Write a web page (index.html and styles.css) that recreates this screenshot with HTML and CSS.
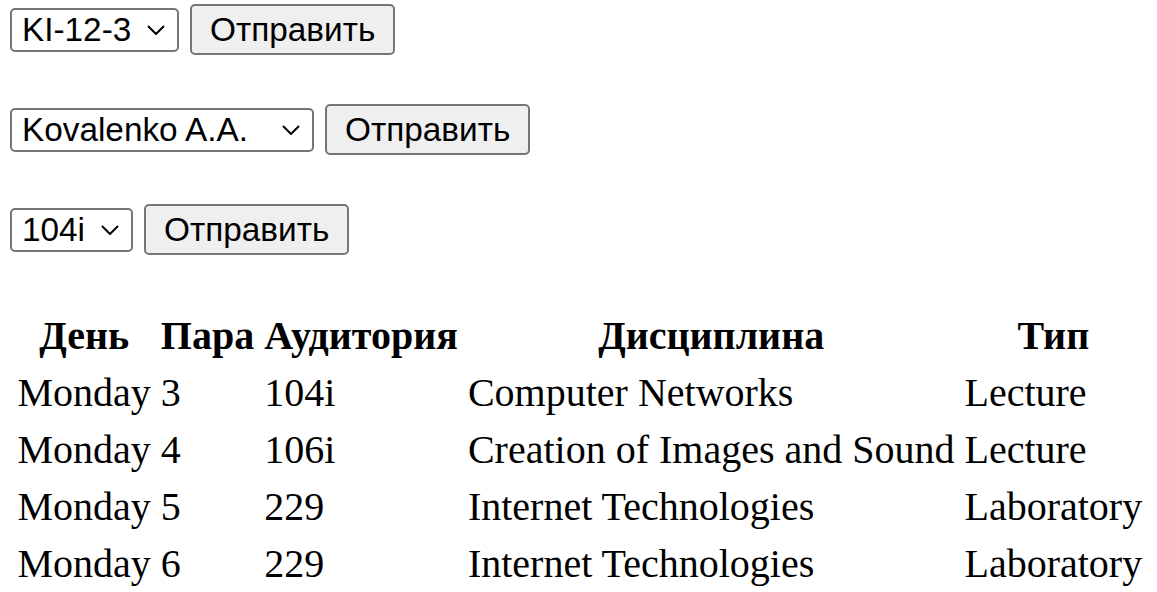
FILE: index.html
```html
<!DOCTYPE html>
<html lang="ru">
<head>
<meta charset="utf-8">
<title>Расписание</title>
<link rel="stylesheet" href="styles.css">
</head>
<body>
<form class="picker">
  <div class="select-wrap select-group">
    <select class="picker-select"><option>KI-12-3</option></select>
    <svg class="chevron" width="18" height="10" viewBox="0 0 18 10"><polyline points="1,1 9,9 17,1"/></svg>
  </div>
  <button class="picker-btn" type="button">Отправить</button>
</form>
<form class="picker">
  <div class="select-wrap select-teacher">
    <select class="picker-select"><option>Kovalenko A.A.</option></select>
    <svg class="chevron" width="18" height="10" viewBox="0 0 18 10"><polyline points="1,1 9,9 17,1"/></svg>
  </div>
  <button class="picker-btn" type="button">Отправить</button>
</form>
<form class="picker">
  <div class="select-wrap select-room">
    <select class="picker-select"><option>104i</option></select>
    <svg class="chevron" width="18" height="10" viewBox="0 0 18 10"><polyline points="1,1 9,9 17,1"/></svg>
  </div>
  <button class="picker-btn" type="button">Отправить</button>
</form>
<table class="schedule">
  <thead>
    <tr><th>День</th><th>Пара</th><th>Аудитория</th><th>Дисциплина</th><th>Тип</th></tr>
  </thead>
  <tbody>
    <tr><td>Monday</td><td>3</td><td>104i</td><td>Computer Networks</td><td>Lecture</td></tr>
    <tr><td>Monday</td><td>4</td><td>106i</td><td>Creation of Images and Sound</td><td>Lecture</td></tr>
    <tr><td>Monday</td><td>5</td><td>229</td><td>Internet Technologies</td><td>Laboratory</td></tr>
    <tr><td>Monday</td><td>6</td><td>229</td><td>Internet Technologies</td><td>Laboratory</td></tr>
  </tbody>
</table>
</body>
</html>
```
FILE: styles.css
```css
html, body {
  margin: 0;
  background: #ffffff;
  color: #000000;
}
body {
  padding: 4px 0 0 10px;
  font-family: "Liberation Serif", "Times New Roman", serif;
}
.picker {
  display: flex;
  align-items: center;
  gap: 11px;
  height: 51px;
  margin: 0 0 49px 0;
}
.select-wrap {
  position: relative;
  height: 44px;
}
.select-group { width: 169px; }
.select-teacher { width: 304px; }
.select-room { width: 123px; }
.picker-select {
  -webkit-appearance: none;
  appearance: none;
  width: 100%;
  height: 44px;
  box-sizing: border-box;
  margin: 0;
  padding: 0 40px 0 10px;
  border: 2px solid #767676;
  border-radius: 5px;
  background: #ffffff;
  color: #000000;
  font-family: "Liberation Sans", Arial, sans-serif;
  font-size: 33.33px;
}
.chevron {
  position: absolute;
  right: 14px;
  top: 17px;
  pointer-events: none;
}
.chevron polyline {
  fill: none;
  stroke: #000000;
  stroke-width: 2;
}
.picker-btn {
  height: 51px;
  box-sizing: border-box;
  margin: 0;
  padding: 0 18px;
  border: 2px solid #767676;
  border-radius: 5px;
  background: #efefef;
  color: #000000;
  font-family: "Liberation Sans", Arial, sans-serif;
  font-size: 33.33px;
}
.schedule {
  border-spacing: 5px;
  font-size: 40px;
  font-family: "Liberation Serif", "Times New Roman", serif;
}
.schedule th,
.schedule td {
  padding: 2.5px;
  line-height: 47px;
}
.schedule th {
  font-weight: bold;
  text-align: center;
}
.schedule td {
  text-align: left;
}
```
